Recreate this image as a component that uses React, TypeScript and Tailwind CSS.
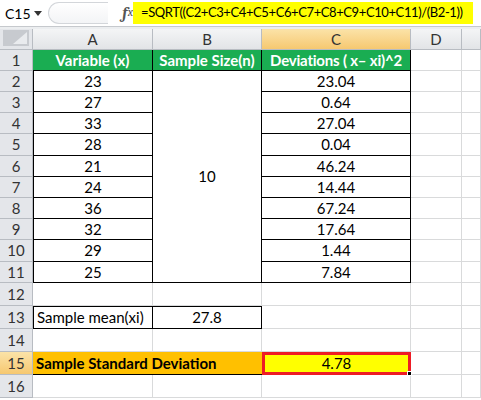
import React from "react";

const FONT = { fontFamily: "Lato, 'Noto Sans', sans-serif" };

// Row heights in px: header, rows 1..16 (last one is cut by the window).
const ROW_H = [21, 21, 21, 21, 21, 22, 21, 21, 21, 21, 22, 21, 23, 23, 23, 23, 23];
const VARS = ["23", "27", "33", "28", "21", "24", "36", "32", "29", "25"];
const DEVS = ["23.04", "0.64", "27.04", "0.04", "46.24", "14.44", "67.24", "17.64", "1.44", "7.84"];

const GRID = "border-r border-b border-[#d9dadb]";
const BOX = "border-r border-b border-black";

function RowHead({ n, active }: { n: number; active?: boolean }) {
  return (
    <div
      className={`flex items-center justify-center border-r border-b border-[#b8bcc2] text-[15px] text-[#333] ${
        active ? "bg-gradient-to-b from-[#fbe3a8] to-[#f6c870]" : "bg-[#e4e6ea]"
      }`}
    >
      {n}
    </div>
  );
}

export default function App() {
  const rows = ROW_H.map((h) => `${h}px`).join(" ");

  return (
    <div className="h-[400px] w-[481px] overflow-hidden bg-white text-black" style={FONT}>
      {/* formula bar */}
      <div className="flex h-[27px] items-center border-b border-[#c6c9cd] bg-white">
        <div className="flex w-[46px] shrink-0 items-center justify-between pl-[5px] pr-[4px] text-[14px]">
          <span>C15</span>
          <svg width="8" height="5" viewBox="0 0 8 5">
            <path d="M0 0h8L4 5z" fill="#333" />
          </svg>
        </div>
        <div className="ml-[2px] h-[22px] w-[60px] shrink-0 rounded-l-full border-l border-y border-[#d3d6da] bg-gradient-to-b from-white to-[#f3f4f6]" />
        <div className="flex w-[25px] shrink-0 justify-end font-serif text-[16px] italic text-[#555]">
          <span className="font-bold">f</span>
          <span className="text-[12px] leading-[22px]">x</span>
        </div>
        <div className="flex-1" />
        <div className="mr-[8px] flex h-[22px] w-[340px] shrink-0 items-center overflow-hidden whitespace-nowrap bg-[#ffff00] pl-[8px] text-[13px] tracking-[-0.4px]">
          =SQRT((C2+C3+C4+C5+C6+C7+C8+C9+C10+C11)/(B2-1))
        </div>
      </div>
      <div className="h-[2px] bg-[#eceef0]" />

      <div
        className="grid text-[15px]"
        style={{ gridTemplateColumns: "33px 120px 109px 149px 51px 1fr", gridTemplateRows: rows }}
      >
        {/* column headers */}
        <div className="flex items-end justify-end border-r border-b border-[#b8bcc2] bg-[#e4e6ea] p-[3px]">
          <svg width="26" height="16" viewBox="0 0 26 16">
            <rect width="26" height="16" fill="#c7cacf" />
            <path d="M24 2V14H10z" fill="#e9ebee" />
          </svg>
        </div>
        {["A", "B", "C", "D", ""].map((c) => (
          <div
            key={c || "E"}
            className={`flex items-center justify-center border-r border-b border-[#b8bcc2] text-[#333] ${
              c === "C" ? "bg-gradient-to-b from-[#fbe3a8] to-[#f6c870]" : "bg-gradient-to-b from-[#f4f5f6] to-[#e2e4e7]"
            }`}
          >
            {c}
          </div>
        ))}

        {/* row 1 */}
        <RowHead n={1} />
        <div className="flex items-center justify-center border-r border-b border-black bg-[#1aad52] font-bold text-white">
          Variable (x)
        </div>
        <div className="flex items-center justify-center border-r border-b border-black bg-[#1aad52] font-bold text-white">
          Sample Size(n)
        </div>
        <div className="flex items-center justify-center border-r border-b border-black bg-[#1aad52] font-bold text-white tracking-[-0.2px]">
          Deviations ( x– xi)^2
        </div>
        <div className={GRID} />
        <div className={GRID} />

        {/* rows 2..11 */}
        {VARS.map((v, i) => (
          <React.Fragment key={i}>
            <RowHead n={i + 2} />
            <div className={`flex items-center justify-center border-l ${BOX}`}>{v}</div>
            {i === 0 && (
              <div className={`row-span-10 flex items-center justify-center ${BOX}`}>10</div>
            )}
            <div className={`flex items-center justify-center ${BOX}`}>{DEVS[i]}</div>
            <div className={GRID} />
            <div className={GRID} />
          </React.Fragment>
        ))}

        {/* row 12 */}
        <RowHead n={12} />
        <div className={GRID} />
        <div className={GRID} />
        <div className={GRID} />
        <div className={GRID} />
        <div className={GRID} />

        {/* row 13 */}
        <RowHead n={13} />
        <div className={`flex items-center border-l border-t pl-[3px] ${BOX}`}>Sample mean(xi)</div>
        <div className={`flex items-center justify-center border-t ${BOX}`}>27.8</div>
        <div className={GRID} />
        <div className={GRID} />
        <div className={GRID} />

        {/* row 14 */}
        <RowHead n={14} />
        <div className={GRID} />
        <div className={GRID} />
        <div className={GRID} />
        <div className={GRID} />
        <div className={GRID} />

        {/* row 15 */}
        <RowHead n={15} active />
        <div className="col-span-2 flex items-center border-b border-black bg-[#ffc000] pl-[3px] font-bold">
          Sample Standard Deviation
        </div>
        <div className="relative flex items-center justify-center border-[3px] border-[#ee1c25] bg-[#ffff00]">
          4.78
          <span className="absolute -bottom-[4px] -right-[4px] h-[5px] w-[5px] border border-white bg-black" />
        </div>
        <div className={GRID} />
        <div className={GRID} />

        {/* row 16 */}
        <RowHead n={16} />
        <div className={GRID} />
        <div className={GRID} />
        <div className={GRID} />
        <div className={GRID} />
        <div className={GRID} />
      </div>
    </div>
  );
}
